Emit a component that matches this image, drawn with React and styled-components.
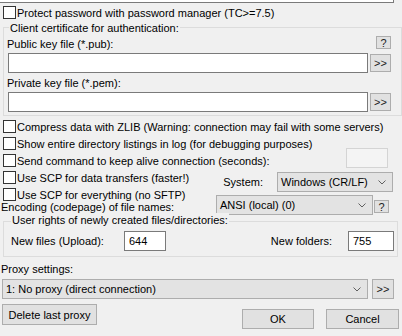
import React from 'react';
import styled, { createGlobalStyle } from 'styled-components';

const Global = createGlobalStyle`
  html, body { margin: 0; padding: 0; background: #f0f0f0; }
  body { font-family: "Liberation Sans", Arial, sans-serif; }
`;

const Dialog = styled.div`
  width: 402px;
  height: 336px;
  overflow: hidden;
  background: #f0f0f0;
  font-family: "Liberation Sans", Arial, sans-serif;
  font-size: 11px;
  color: #000;
  display: flex;
  flex-direction: column;
  box-sizing: border-box;
`;

const TopEdge = styled.div`
  width: 394px;
  height: 3px;
  flex: none;
  box-sizing: border-box;
  background: #fff;
  border-bottom: 1px solid #7a7a7a;
  border-right: 1px solid #7a7a7a;
`;

const CheckRow = styled.label`
  display: flex;
  align-items: center;
  height: 17px;
  flex: none;
  padding-left: 3px;
  margin-top: ${(p) => p.$mt || 0}px;
`;

const Box = styled.span`
  width: 13px;
  height: 13px;
  flex: none;
  box-sizing: border-box;
  border: 1px solid #333;
  background: #fff;
`;

const CheckText = styled.span`
  margin-left: 1px;
  line-height: 12px;
  white-space: nowrap;
`;

const Group = styled.div`
  flex: none;
  margin: ${(p) => p.$mt}px 0 0 ${(p) => p.$ml}px;
  width: ${(p) => p.$w}px;
  height: ${(p) => p.$h}px;
  box-sizing: border-box;
  border: 1px solid #dcdcdc;
  display: flex;
  flex-direction: column;
`;

const Legend = styled.div`
  align-self: flex-start;
  margin: ${(p) => p.$mt}px 0 0 ${(p) => p.$ml}px;
  padding: 0 1px;
  background: #f0f0f0;
  line-height: 14px;
  white-space: nowrap;
`;

const LabelRow = styled.div`
  display: flex;
  align-items: flex-start;
  margin-top: ${(p) => p.$mt || 0}px;
  padding-left: 3px;
`;

const Text = styled.span`
  line-height: ${(p) => p.$lh || 14}px;
  white-space: nowrap;
  margin-right: ${(p) => p.$mr || 0}px;
`;

const SmallButton = styled.div`
  width: ${(p) => p.$w || 15}px;
  height: ${(p) => p.$h || 13}px;
  flex: none;
  box-sizing: border-box;
  border: 1px solid #adadad;
  background: #e1e1e1;
  color: #222;
  display: flex;
  align-items: center;
  justify-content: center;
  font-size: 11px;
  margin: ${(p) => p.$m || '0'};
`;

const FieldRow = styled.div`
  display: flex;
  align-items: center;
  margin-top: ${(p) => p.$mt || 0}px;
  padding-left: ${(p) => p.$pl || 0}px;
`;

const Edit = styled.div`
  width: ${(p) => p.$w}px;
  height: 20px;
  flex: none;
  box-sizing: border-box;
  border: 1px solid #7a7a7a;
  background: #fff;
  padding-left: 4px;
  line-height: 18px;
  margin: ${(p) => p.$m || '0'};
`;

const DisabledEdit = styled.div`
  width: 42px;
  height: 20px;
  flex: none;
  box-sizing: border-box;
  border: 1px solid #d4d4d4;
  background: #f4f4f4;
  align-self: flex-start;
  margin: -4px 14px 0 auto;
`;

const Combo = styled.div`
  width: ${(p) => p.$w}px;
  height: 20px;
  flex: none;
  box-sizing: border-box;
  border: 1px solid #adadad;
  background: #e3e3e3;
  display: flex;
  align-items: center;
  padding-left: 3px;
  white-space: nowrap;
`;

const ComboText = styled.span`
  flex: 1;
  line-height: 18px;
`;

const Chevron = styled.svg`
  width: 8px;
  height: 5px;
  margin-right: 6px;
  flex: none;
`;

const ScpBlock = styled.div`
  display: flex;
  height: 47px;
  flex: none;
`;

const LeftCol = styled.div`
  display: flex;
  flex-direction: column;
`;

const RightCol = styled.div`
  display: flex;
  flex-direction: column;
  gap: 3px;
  width: 177px;
  margin: 0 9px 0 auto;
  padding-top: 3px;
`;

const SystemRow = styled.div`
  display: flex;
  align-items: center;
  justify-content: flex-end;
`;

const AnsiRow = styled.div`
  display: flex;
  align-items: flex-start;
`;

const PlainLabel = styled.div`
  line-height: ${(p) => p.$lh || 14}px;
  white-space: nowrap;
  padding-left: 1px;
  margin-top: ${(p) => p.$mt || 0}px;
  flex: none;
`;

const RightsRow = styled.div`
  display: flex;
  align-items: center;
  height: 20px;
  margin-top: 4px;
  padding-left: 7px;
`;

const FixedLabel = styled.span`
  width: ${(p) => p.$w}px;
  flex: none;
  white-space: nowrap;
  line-height: 14px;
`;

const AutoLabel = styled.span`
  margin: 0 16px 0 auto;
  white-space: nowrap;
  line-height: 14px;
`;

const BottomRow = styled.div`
  display: flex;
  align-items: flex-start;
  margin-top: 5px;
  padding: 0 3px 0 2px;
`;

const PushButton = styled.div`
  width: ${(p) => p.$w}px;
  height: ${(p) => p.$h || 20}px;
  box-sizing: border-box;
  border: 1px solid #adadad;
  background: #e1e1e1;
  display: flex;
  align-items: center;
  justify-content: center;
  white-space: nowrap;
  flex: none;
  margin: ${(p) => p.$m || '0'};
`;

function Check({ children, mt, extra }) {
  return (
    <CheckRow $mt={mt}>
      <Box />
      <CheckText>{children}</CheckText>
      {extra}
    </CheckRow>
  );
}

function ComboBox({ w, children }) {
  return (
    <Combo $w={w}>
      <ComboText>{children}</ComboText>
      <Chevron viewBox="0 0 8 5">
        <polyline points="0.5,0.5 4,4 7.5,0.5" fill="none" stroke="#606060" strokeWidth="1" />
      </Chevron>
    </Combo>
  );
}

export default function App() {
  return (
    <>
      <Global />
      <Dialog>
        <TopEdge />
        <Check mt={1}>Protect password with password manager (TC&gt;=7.5)</Check>

        <Group $mt={6} $ml={3} $w={399} $h={89}>
          <Legend $mt={-7} $ml={5}>Client certificate for authentication:</Legend>
          <LabelRow $mt={1}>
            <Text $lh={17}>Public key file (*.pub):</Text>
            <SmallButton $m="0 10px 0 auto">?</SmallButton>
          </LabelRow>
          <FieldRow $pl={4}>
            <Edit $w={360} />
            <SmallButton $w={21} $h={18} $m="0 0 0 2px">&gt;&gt;</SmallButton>
          </FieldRow>
          <LabelRow $mt={3}>
            <Text>Private key file (*.pem):</Text>
          </LabelRow>
          <FieldRow $mt={2} $pl={4}>
            <Edit $w={360} />
            <SmallButton $w={21} $h={18} $m="0 0 0 2px">&gt;&gt;</SmallButton>
          </FieldRow>
        </Group>

        <Check mt={2}>Compress data with ZLIB (Warning: connection may fail with some servers)</Check>
        <Check>Show entire directory listings in log (for debugging purposes)</Check>
        <Check extra={<DisabledEdit />}>Send command to keep alive connection (seconds):</Check>

        <ScpBlock>
          <LeftCol>
            <Check>Use SCP for data transfers (faster!)</Check>
            <Check>Use SCP for everything (no SFTP)</Check>
            <PlainLabel $mt={-2} $lh={12}>Encoding (codepage) of file names:</PlainLabel>
          </LeftCol>
          <RightCol>
            <SystemRow>
              <Text $mr={14}>System:</Text>
              <ComboBox w={116}>Windows (CR/LF)</ComboBox>
            </SystemRow>
            <AnsiRow>
              <ComboBox w={157}>ANSI (local) (0)</ComboBox>
              <SmallButton $m="5px 0 0 1px">?</SmallButton>
            </AnsiRow>
          </RightCol>
        </ScpBlock>

        <Group $mt={5} $ml={3} $w={395} $h={36}>
          <Legend $mt={-9} $ml={7}>User rights of newly created files/directories:</Legend>
          <RightsRow>
            <FixedLabel $w={113}>New files (Upload):</FixedLabel>
            <Edit $w={42}>644</Edit>
            <AutoLabel>New folders:</AutoLabel>
            <Edit $w={46} $m="0 3px 0 0">755</Edit>
          </RightsRow>
        </Group>

        <PlainLabel $mt={5}>Proxy settings:</PlainLabel>
        <FieldRow $mt={3} $pl={2}>
          <ComboBox w={366}>1: No proxy (direct connection)</ComboBox>
          <SmallButton $w={22} $h={20} $m="0 0 0 4px">&gt;&gt;</SmallButton>
        </FieldRow>

        <BottomRow>
          <PushButton $w={95} $h={21}>Delete last proxy</PushButton>
          <PushButton $w={72} $m="5px 0 0 auto">OK</PushButton>
          <PushButton $w={73} $m="5px 0 0 12px">Cancel</PushButton>
        </BottomRow>
      </Dialog>
    </>
  );
}
